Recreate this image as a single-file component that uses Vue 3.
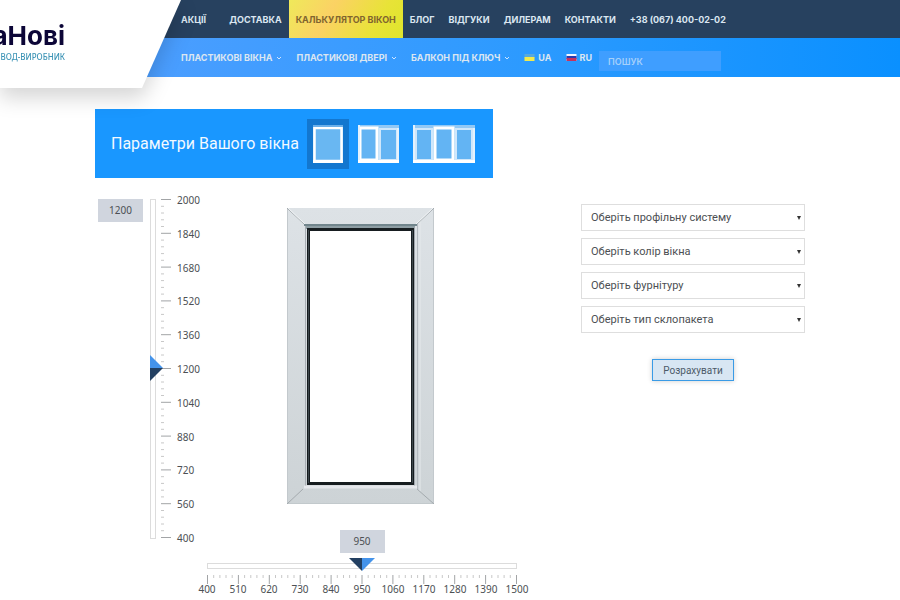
<script setup>
import { ref } from 'vue'

const mainLinks = [
  { text: 'АКЦІЇ', wide: true },
  { text: 'ДОСТАВКА' },
  { text: 'КАЛЬКУЛЯТОР ВІКОН', active: true },
  { text: 'БЛОГ' },
  { text: 'ВІДГУКИ' },
  { text: 'ДИЛЕРАМ' },
  { text: 'КОНТАКТИ' },
  { text: '+38 (067) 400-02-02' },
]
const productLinks = ['ПЛАСТИКОВІ ВІКНА', 'ПЛАСТИКОВІ ДВЕРІ', 'БАЛКОН ПІД КЛЮЧ']

const windowTypes = ['Одностулкове', 'Двостулкове', 'Тристулкове']
const selectedType = ref(0)

const height = ref(1200)
const width = ref(950)
const heightMarks = [2000, 1840, 1680, 1520, 1360, 1200, 1040, 880, 720, 560, 400]
const widthMarks = [400, 510, 620, 730, 840, 950, 1060, 1170, 1280, 1390, 1500]
const ticks = Array.from({ length: 51 }, (_, i) => i)

const options = [
  'Оберіть профільну систему',
  'Оберіть колір вікна',
  'Оберіть фурнітуру',
  'Оберіть тип склопакета',
]
</script>

<template>
  <div class="page">
    <header class="header">
      <nav class="bar bar-main" aria-label="Головне меню">
        <a
          v-for="link in mainLinks"
          :key="link.text"
          href="#"
          class="link"
          :class="{ active: link.active, wide: link.wide }"
        >{{ link.text }}</a>
      </nav>
      <div class="bar bar-products">
        <a v-for="text in productLinks" :key="text" href="#" class="link">
          {{ text }}
          <svg class="chevron" viewBox="0 0 6 4"><path d="M1 1l2 2 2-2" /></svg>
        </a>
        <a href="#" class="link lang">
          <svg class="flag" viewBox="0 0 10 7"><rect width="10" height="4" fill="#58a9dc" /><rect y="3" width="10" height="4" fill="#f2ea4c" /></svg>
          UA
        </a>
        <a href="#" class="link lang">
          <svg class="flag" viewBox="0 0 10 7"><rect width="10" height="7" fill="#f4f6ff" /><rect y="2" width="10" height="3" fill="#273bb0" /><rect y="4" width="10" height="3" fill="#c8325c" /></svg>
          RU
        </a>
        <input class="search" type="search" placeholder="ПОШУК" aria-label="ПОШУК" />
      </div>
      <div class="logo-shadow">
        <a href="#" class="logo">
          <span class="logo-name">аНові</span>
          <span class="logo-note">ВОД-ВИРОБНИК</span>
        </a>
      </div>
    </header>

    <main class="content">
      <section class="panel">
        <h1 class="title">Параметри Вашого вікна</h1>
        <button
          v-for="(name, i) in windowTypes"
          :key="name"
          type="button"
          class="type"
          :class="{ selected: selectedType === i }"
          :aria-label="name"
          @click="selectedType = i"
        >
          <svg v-if="i === 0" width="30" height="38" viewBox="0 0 30 38">
            <rect width="30" height="38" fill="#9ccdf4" />
            <rect x="1.5" y="3" width="27" height="33" fill="#69b7f2" stroke="#fff" stroke-width="2.5" />
            <path d="M0 1h30" stroke="#6bb0ea" stroke-width="2" />
            <path d="M0 36.5h30" stroke="#fff" stroke-width="3" />
          </svg>
          <svg v-else-if="i === 1" width="41" height="38" viewBox="0 0 41 38">
            <rect width="41" height="38" fill="#91c8f5" />
            <rect x="22" y="4" width="17" height="31" fill="#63b4f3" stroke="#cfe7fb" stroke-width="2" />
            <rect x="2" y="3" width="17" height="32" fill="#63b4f3" stroke="#fff" stroke-width="3" />
            <path d="M1 0v38M40 3v35" stroke="#e3f1fd" stroke-width="2" />
            <path d="M0 36.5h41" stroke="#fff" stroke-width="3" />
          </svg>
          <svg v-else width="62" height="38" viewBox="0 0 62 38">
            <rect width="62" height="38" fill="#91c8f5" />
            <rect x="3" y="4" width="16" height="31" fill="#63b4f3" stroke="#cfe7fb" stroke-width="2" />
            <rect x="43" y="4" width="16" height="31" fill="#63b4f3" stroke="#cfe7fb" stroke-width="2" />
            <rect x="22" y="3" width="18" height="32" fill="#63b4f3" stroke="#fff" stroke-width="3" />
            <path d="M1 0v38M61 3v35" stroke="#e3f1fd" stroke-width="2" />
            <path d="M0 36.5h62" stroke="#fff" stroke-width="3" />
          </svg>
        </button>
      </section>

      <div class="columns">
        <section class="stage">
          <div class="height-ruler">
            <output class="value">{{ height }}</output>
            <div class="track track-v">
              <input v-model.number="height" class="range range-v" type="range" min="400" max="2000" aria-label="Висота" />
            </div>
            <svg class="ticks-v" viewBox="0 0 10 340" preserveAspectRatio="none">
              <path
                v-for="t in ticks"
                :key="t"
                :d="`M0 ${(0.5 + t * 6.76).toFixed(1)}h${t % 5 ? 3 : 10}`"
                :class="{ minor: t % 5 }"
              />
            </svg>
            <ul class="marks marks-v">
              <li v-for="m in heightMarks" :key="m">{{ m }}</li>
            </ul>
          </div>

          <div class="preview">
            <svg class="window" width="147" height="296" viewBox="0 0 147 296">
              <defs>
                <linearGradient id="frame" x1="0" y1="0" x2="0" y2="1">
                  <stop offset="0" stop-color="#dde2e6" />
                  <stop offset="1" stop-color="#cdd3d6" />
                </linearGradient>
              </defs>
              <path fill-rule="evenodd" fill="url(#frame)" d="M0 0H147V296H0ZM23 21V274H124V21Z" />
              <path d="M.5 0V296M146.500 0V296" stroke="#c3c9cd" />
              <path d="M0 295.500H147" stroke="#c2c9cc" />
              <path d="M130.500 15V281" stroke="#b5bbc1" />
              <path d="M133 13V283" stroke="#e5e9ec" />
              <path d="M0 0L17 16M147 0L130 16M0 296L16 281M147 296L130 281" stroke="#a4aaae" />
              <path d="M1 0L18 16M146 0L129 16" stroke="#f2f5f7" />
              <path d="M17 17H130" stroke="#71858c" stroke-width="2" />
              <path d="M19 19.500H128" stroke="#8e9ea4" stroke-width="3" />
              <path d="M18.500 18V279" stroke="#a7adb3" />
              <path d="M127.500 19V279" stroke="#9fa5ac" />
              <path d="M17 279H130" stroke="#e6e8ec" stroke-width="3" />
              <path fill-rule="evenodd" fill="#171d20" d="M20 20H127V277H20ZM23 23V274H124V23Z" />
              <path d="M21.500 22V275M125.500 22V275" stroke="#3d474c" />
            </svg>
            <output class="value">{{ width }}</output>
            <div class="track track-h">
              <input v-model.number="width" class="range range-h" type="range" min="400" max="1500" aria-label="Ширина" />
            </div>
            <svg class="ticks-h" viewBox="0 0 310 9" preserveAspectRatio="none">
              <path
                v-for="t in ticks"
                :key="t"
                :d="`M${(0.5 + t * 6.18).toFixed(1)} 0v${t % 5 ? 3 : 9}`"
                :class="{ minor: t % 5 }"
              />
            </svg>
            <ul class="marks marks-h">
              <li v-for="m in widthMarks" :key="m">{{ m }}</li>
            </ul>
          </div>
        </section>

        <form class="form" @submit.prevent>
          <div v-for="text in options" :key="text" class="field">
            <select class="select" :aria-label="text">
              <option>{{ text }}</option>
            </select>
            <svg class="arrow" viewBox="0 0 4 4"><path d="M0 0h4L2 4z" /></svg>
          </div>
          <button class="submit" type="submit">Розрахувати</button>
        </form>
      </div>
    </main>
  </div>
</template>

<style>
body {
  margin: 0;
  background: #fff;
}
</style>

<style scoped>
.page {
  font-family: "Noto Sans", "Open Sans", sans-serif;
  font-size: 10px;
  color: #4c5054;
}
.header {
  position: relative;
}
.bar {
  display: flex;
  align-items: stretch;
  padding-left: 174px;
}
.bar-main {
  height: 38px;
  background: #27415f;
}
.bar-products {
  height: 39px;
  background: linear-gradient(90deg, #4b9eff 150px, #2b9aff 60%, #0a90ff);
}
.link {
  display: flex;
  align-items: center;
  padding: 0 7px;
  font-family: Inter, "Noto Sans", sans-serif;
  font-size: 9px;
  font-weight: 700;
  color: #dbe6f1;
  text-decoration: none;
  white-space: nowrap;
}
.link.wide {
  padding-right: 16px;
}
.link.active {
  color: #80642f;
  background: linear-gradient(120deg, #efe95a, #fbd264 35%, #e8e337 75%, #dfe52c);
}
.chevron {
  width: 6px;
  height: 4px;
  margin-left: 4px;
  fill: none;
  stroke: #cfe5ff;
}
.flag {
  width: 11px;
  height: 7px;
  margin-right: 3px;
}
.search {
  box-sizing: border-box;
  width: 122px;
  height: 20px;
  margin: 13px 0 0;
  padding: 0 9px;
  border: 0;
  background: #3f9eff;
  font: 600 9px Inter, "Noto Sans", sans-serif;
  color: #fff;
  outline: 0;
}
.search::placeholder {
  color: #a5d0fb;
}
.logo-shadow {
  position: absolute;
  top: 0;
  left: 0;
  filter: drop-shadow(0 10px 10px rgba(0, 0, 0, 0.16));
}
.logo {
  box-sizing: border-box;
  display: flex;
  flex-direction: column;
  align-items: flex-end;
  width: 181px;
  height: 88px;
  padding: 21px 116px 0 0;
  background: #fff;
  clip-path: polygon(0 0, 100% 0, 142px 100%, 0 100%);
  text-decoration: none;
  white-space: nowrap;
}
.logo-name {
  font-family: Inter, "Noto Sans", sans-serif;
  font-size: 26px;
  font-weight: 700;
  line-height: 30px;
  color: #0c0637;
}
.logo-note {
  font-size: 8px;
  font-weight: 500;
  line-height: 12px;
  color: #3d94b6;
}
.content {
  max-width: 710px;
  margin: 32px auto 0;
}
.panel {
  box-sizing: border-box;
  display: flex;
  align-items: center;
  width: fit-content;
  height: 69px;
  padding: 0 11px 0 16px;
  background: #1997ff;
}
.title {
  margin: 0 8px 0 0;
  font-family: Roboto, "Noto Sans", sans-serif;
  font-size: 16px;
  font-weight: 400;
  color: #f2f9ff;
  white-space: nowrap;
}
.type {
  display: flex;
  align-items: center;
  height: 50px;
  padding: 0 7px;
  border: 0;
  background: none;
}
.type.selected {
  margin-right: 2px;
  padding: 0 6px;
  background: #1377cf;
}
.columns {
  display: flex;
  justify-content: space-between;
  margin-top: 21px;
}
.stage {
  display: flex;
  padding-left: 3px;
}
.height-ruler {
  display: flex;
  align-items: flex-start;
  width: 109px;
}
.value {
  width: 45px;
  line-height: 23px;
  text-align: center;
  background: #d0d5de;
}
.track {
  position: relative;
  box-sizing: border-box;
  border: 1px solid #dcdcdc;
}
.track-v {
  width: 6px;
  height: 340px;
  margin-left: 7px;
}
.track-h {
  width: 100%;
  height: 6px;
  margin-top: 10px;
}
.range {
  position: absolute;
  margin: 0;
  appearance: none;
  background: none;
}
.range-v {
  top: -15px;
  left: -1px;
  width: 13px;
  height: 366px;
  writing-mode: vertical-lr;
  direction: rtl;
}
.range-h {
  top: -6px;
  left: -14px;
  width: 336px;
  height: 13px;
}
.range::-webkit-slider-thumb {
  appearance: none;
}
.range-v::-webkit-slider-thumb {
  width: 13px;
  height: 26px;
  background: linear-gradient(#4493ea 50%, #223f61 50%);
  clip-path: polygon(0 0, 100% 50%, 0 100%);
}
.range-h::-webkit-slider-thumb {
  width: 26px;
  height: 13px;
  background: linear-gradient(90deg, #223f61 50%, #4493ea 50%);
  clip-path: polygon(0 0, 100% 0, 50% 100%);
}
.ticks-v,
.ticks-h {
  overflow: visible;
  stroke: #a2a4a6;
}
.ticks-v {
  width: 10px;
  height: 340px;
  margin-left: 5px;
}
.ticks-h {
  width: 100%;
  height: 9px;
  margin-top: 6px;
}
.minor {
  stroke: #c8c8c8;
}
.marks {
  display: flex;
  justify-content: space-between;
  margin: 0;
  padding: 0;
  list-style: none;
  line-height: 14px;
}
.marks-v {
  flex-direction: column;
  height: 352px;
  margin: -6px 0 0 6px;
}
.marks-h {
  width: 340px;
  margin-top: -2px;
}
.marks-h li {
  width: 30px;
  text-align: center;
}
.preview {
  display: flex;
  flex-direction: column;
  align-items: center;
  width: 310px;
  padding-top: 9px;
}
.window {
  margin: 0 4px 26px 0;
}
.form {
  display: flex;
  flex-direction: column;
  gap: 7px;
  width: 224px;
  padding-top: 5px;
}
.field {
  display: grid;
  align-items: center;
}
.select,
.arrow {
  grid-area: 1 / 1;
}
.select {
  box-sizing: border-box;
  width: 100%;
  height: 27px;
  padding: 0 9px;
  border: 1px solid #dedede;
  border-radius: 0;
  appearance: none;
  background: #fff;
  font: 11px Roboto, "Noto Sans", sans-serif;
  color: #4c4f53;
}
.arrow {
  justify-self: end;
  width: 4px;
  height: 4px;
  margin-right: 4px;
  fill: #333;
  pointer-events: none;
}
.submit {
  align-self: center;
  width: 82px;
  height: 22px;
  margin-top: 19px;
  padding: 0;
  border: 1px solid #3a9be6;
  background: #d8e6f3;
  box-shadow: 0 0 5px rgba(0, 0, 0, 0.2);
  font: 10px Roboto, "Noto Sans", sans-serif;
  color: #4c5a68;
}
</style>
